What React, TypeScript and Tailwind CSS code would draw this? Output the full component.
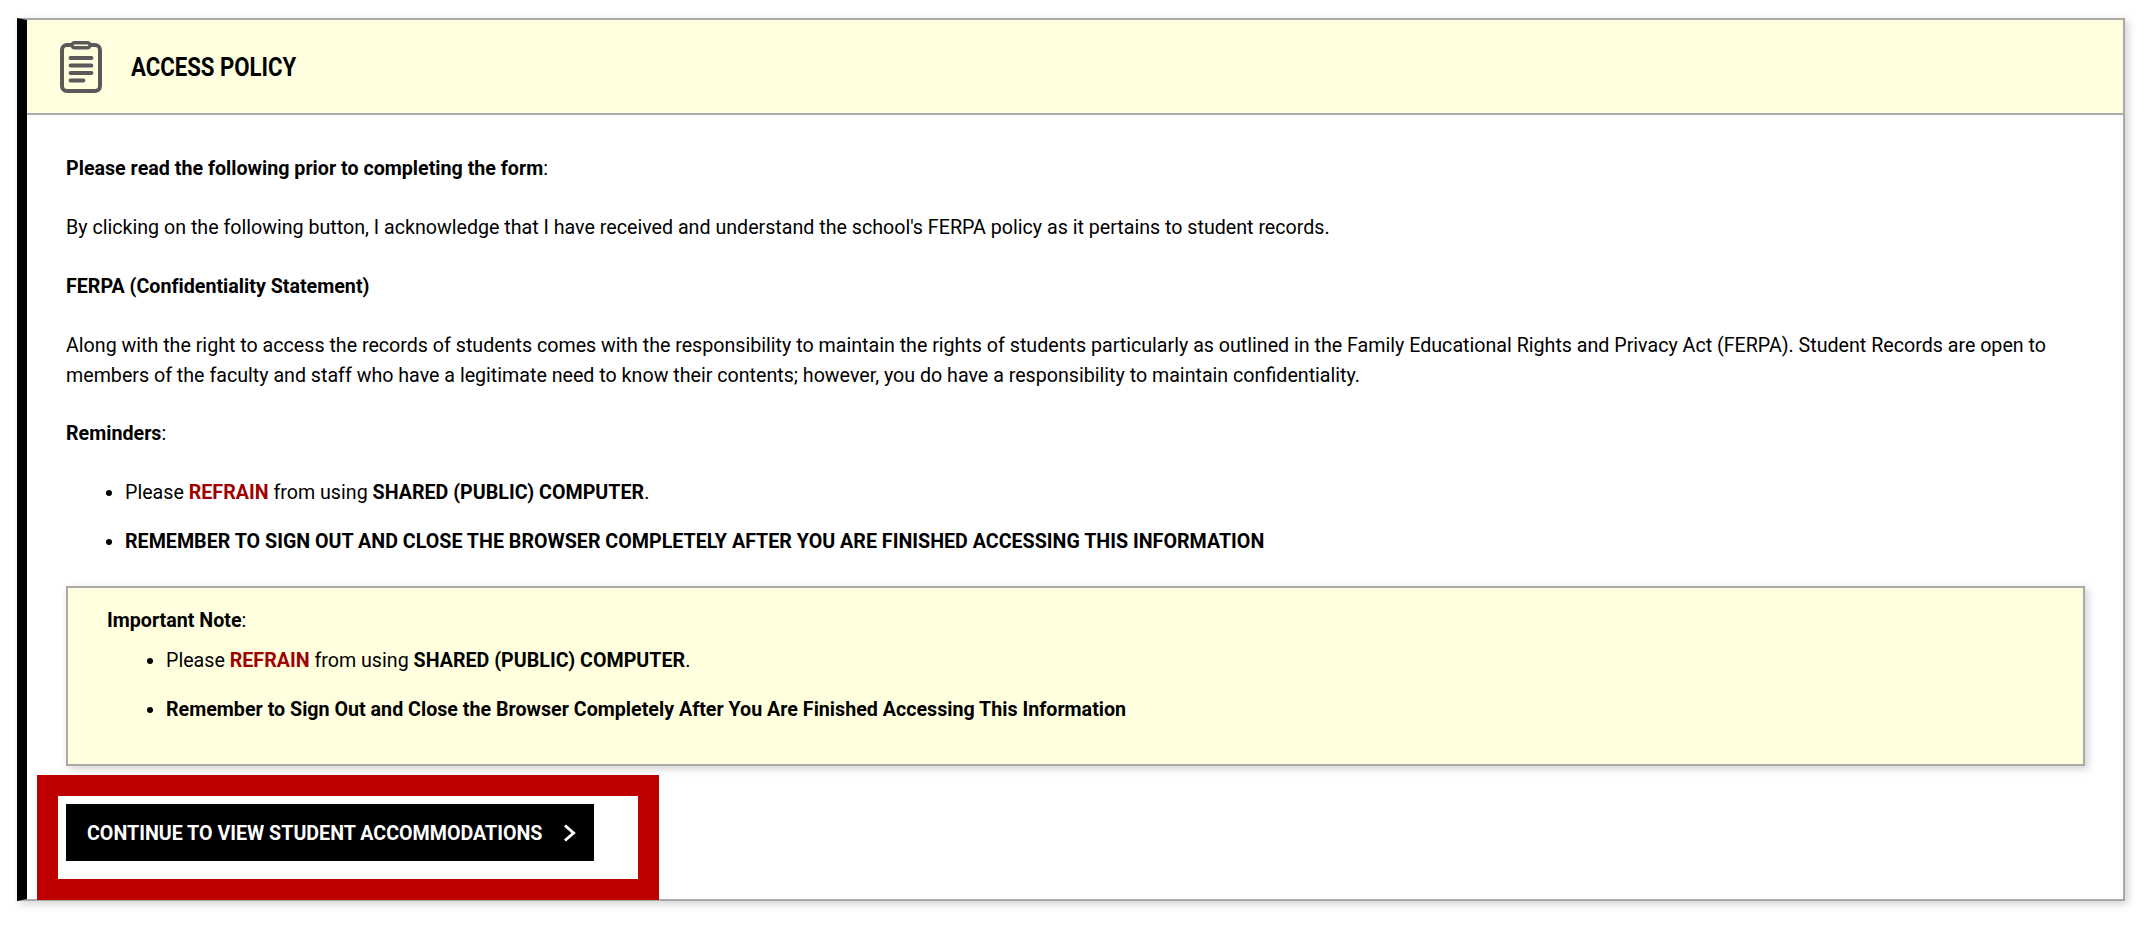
import React from "react";

function ClipboardIcon() {
  return (
    <svg width="42" height="52" viewBox="0 0 42 52" fill="none" stroke="#5a5a5a" strokeLinecap="round">
      <rect x="2" y="4" width="38" height="46" rx="5" strokeWidth="4" />
      <rect x="12" y="1.8" width="18" height="5" rx="2.5" strokeWidth="3.4" fill="#ffffdf" />
      <path d="M10.5 17H31.5M10.5 24.5H31.5M10.5 32H31.5M10.5 39.5H23.5" strokeWidth="3.8" />
    </svg>
  );
}

function Chevron() {
  return (
    <svg width="13" height="18" viewBox="0 0 13 18" fill="none" stroke="#fff" strokeWidth="3">
      <path d="M2 1.5L10.5 9L2 16.5" />
    </svg>
  );
}

const Refrain = () => <span className="font-bold tracking-[0.01px] text-[#a00000]">REFRAIN</span>;

export default function App() {
  return (
    <div className="min-h-[925px] bg-white pt-[18px] pl-[17px] pr-5 font-['Roboto',sans-serif] text-[19.65px] leading-[30px] text-black">
      <div className="relative h-[883px] border-y-2 border-r-2 border-l-[10px] border-y-[#aaaaaa] border-r-[#aaaaaa] border-l-black bg-white shadow-[3px_3px_8px_rgba(0,0,0,0.18)]">
        <div className="flex h-[95px] items-center border-b-2 border-[#aaaaaa] bg-[#ffffdf] pl-[33px]">
          <ClipboardIcon />
          <h2 className="ml-[29px] origin-left scale-x-[0.853] text-[26px] font-bold whitespace-nowrap">ACCESS POLICY</h2>
        </div>
        <div className="pt-[39px] pr-[38px] pl-[39px]">
          <p><strong className="font-bold tracking-[0.01px]">Please read the following prior to completing the form</strong>:</p>
          <p className="mt-[29px]">By clicking on the following button, I acknowledge that I have received and understand the school's FERPA policy as it pertains to student records.</p>
          <p className="mt-[29px] font-bold tracking-[0.01px]">FERPA (Confidentiality Statement)</p>
          <p className="mt-[29px]">Along with the right to access the records of students comes with the responsibility to maintain the rights of students particularly as outlined in the Family Educational Rights and Privacy Act (FERPA). Student Records are open to members of the faculty and staff who have a legitimate need to know their contents; however, you do have a responsibility to maintain confidentiality.</p>
          <p className="mt-[28px]"><strong className="font-bold tracking-[0.01px]">Reminders</strong>:</p>
          <ul className="mt-[29px] list-disc pl-[59px]">
            <li>Please <Refrain /> from using <strong className="font-bold tracking-[0.01px]">SHARED (PUBLIC) COMPUTER</strong>.</li>
            <li className="mt-[19px] font-bold tracking-[0.01px]">REMEMBER TO SIGN OUT AND CLOSE THE BROWSER COMPLETELY AFTER YOU ARE FINISHED ACCESSING THIS INFORMATION</li>
          </ul>
          <div className="mt-[29px] h-[180px] border-2 border-[#aaaaaa] bg-[#ffffdf] pt-[18px] pl-[39px] shadow-[3px_3px_8px_rgba(0,0,0,0.18)]">
            <p><strong className="font-bold tracking-[0.01px]">Important Note</strong>:</p>
            <ul className="mt-[10px] list-disc pl-[59px]">
              <li>Please <Refrain /> from using <strong className="font-bold tracking-[0.01px]">SHARED (PUBLIC) COMPUTER</strong>.</li>
              <li className="mt-[19px] font-bold tracking-[0.01px]">Remember to Sign Out and Close the Browser Completely After You Are Finished Accessing This Information</li>
            </ul>
          </div>
          <button className="mt-[38px] flex h-[57px] w-[528px] items-center justify-between bg-black pr-[18px] pl-[21px] text-white">
            <span className="origin-left scale-x-[0.982] text-[20px] font-bold whitespace-nowrap">CONTINUE TO VIEW STUDENT ACCOMMODATIONS</span>
            <Chevron />
          </button>
        </div>
        <div className="absolute top-[755px] left-[10px] h-[125px] w-[622px] border-x-[21px] border-y-[21px] border-[#bf0000]" />
      </div>
    </div>
  );
}
